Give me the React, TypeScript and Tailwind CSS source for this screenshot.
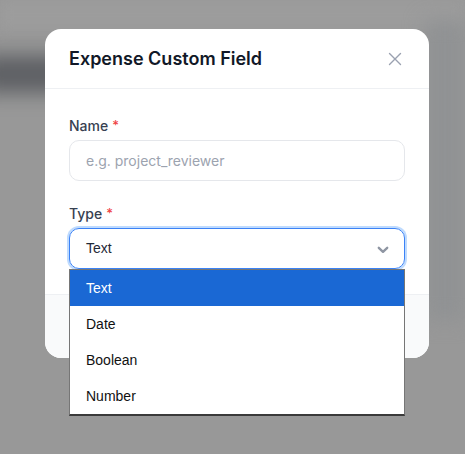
import React from "react";

export default function App() {
  return (
    <div className="relative w-[465px] h-[454px] overflow-hidden bg-[#989898]" style={{ fontFamily: "Inter, 'Noto Sans', sans-serif" }}>
      {/* blurred page behind */}
      <div className="absolute left-[-20px] top-[55px] w-[200px] h-[38px] bg-[#5e6064] blur-[10px]" />
      <div className="absolute left-0 top-0 w-full h-[30px] bg-[#9c9c9c] blur-[6px]" />
      <div className="absolute right-0 top-[20px] w-[40px] h-[300px] bg-[#909294] blur-[10px]" />

      <div className="relative pt-[29px] pl-[45px]">
        <div className="w-[384px] h-[329px] bg-white rounded-2xl overflow-hidden flex flex-col">
          <div className="h-[60px] flex items-center justify-between px-6 border-b border-[#eef0f3]">
            <h2 className="text-[18px] font-semibold text-[#111827]">Expense Custom Field</h2>
            <svg width="16" height="16" viewBox="0 0 16 16" className="mr-[2px] mt-[1px]" fill="none" stroke="#9aa1b0" strokeWidth="1.4" strokeLinecap="round">
              <path d="M2.5 2.5 13.5 13.5M13.5 2.5 2.5 13.5" />
            </svg>
          </div>
          <div className="flex-1 px-6 pt-[26px]">
            <div className="flex items-center h-5 text-[14px] font-medium text-[#374151]">
              Name<span className="text-[#ef4444] ml-1 text-[13px] leading-none">*</span>
            </div>
            <div className="mt-[5px] h-[41px] rounded-[10px] border border-[#e5e7eb] flex items-center px-4 text-[14px] text-[#9ca3af]">
              e.g. project_reviewer
            </div>
            <div className="mt-[22px] flex items-center h-5 text-[14px] font-medium text-[#374151]">
              Type<span className="text-[#ef4444] ml-1 text-[13px] leading-none">*</span>
            </div>
            <div className="mt-[5px] h-[41px] rounded-[10px] border border-[#3b82f6] ring-2 ring-[#bfdbfe] flex items-center justify-between px-4 text-[14px] text-[#1f2937]" style={{ fontFamily: "'Liberation Sans', Arial, sans-serif" }}>
              <span>Text</span>
              <svg width="12" height="8" viewBox="0 0 12 8" className="mr-[-1px] mt-[2px]" fill="none" stroke="#8f96a3" strokeWidth="2.4" strokeLinecap="round" strokeLinejoin="round">
                <path d="M1.8 1.8 6 5.8 10.2 1.8" />
              </svg>
            </div>
          </div>
          <div className="h-[64px] bg-[#f9fafb] border-t border-[#eef0f3]" />
        </div>
      </div>

      {/* native-like dropdown list */}
      <div className="absolute left-[69px] top-[269px] w-[336px] bg-white border border-[#767676] border-b-2 border-b-[#3a3a3a] text-[14px] text-[#111111]" style={{ fontFamily: "'Liberation Sans', Arial, sans-serif" }}>
        <div className="h-[36px] flex items-center pl-4 bg-[#1a68d4] text-white">Text</div>
        <div className="h-[36px] flex items-center pl-4">Date</div>
        <div className="h-[36px] flex items-center pl-4">Boolean</div>
        <div className="h-[36px] flex items-center pl-4">Number</div>
      </div>
    </div>
  );
}
